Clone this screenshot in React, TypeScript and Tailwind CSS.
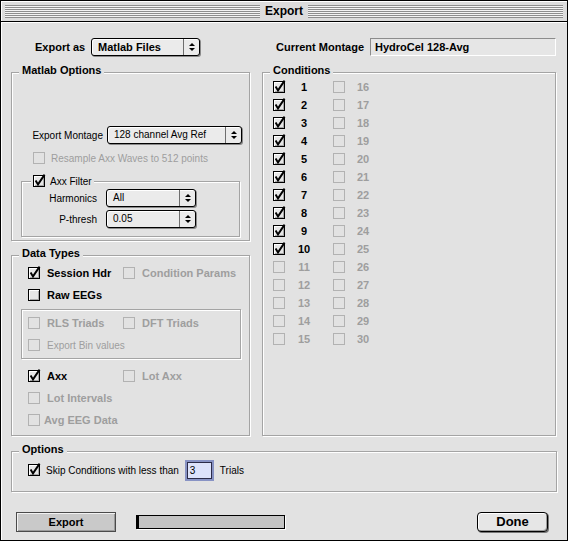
import React from "react";

const BG = "bg-[#e2e2e2]";

function Check({ on = false, disabled = false }: { on?: boolean; disabled?: boolean }) {
  return (
    <span
      className={
        "relative inline-block w-[12px] h-[12px] shrink-0 border " +
        (disabled
          ? "border-[#b2b2b2]"
          : "border-black bg-[#e6e6e6] shadow-[inset_1px_1px_0_#fff,inset_-1px_-1px_0_#a8a8a8]")
      }
    >
      {on && (
        <svg className="absolute left-[-1px] top-[-1px] overflow-visible" width="12" height="12" viewBox="0 0 12 12">
          <path d="M2.6 5.4 L5 9.4 L11.6 -0.4" stroke="#000" strokeWidth="1.9" fill="none" strokeLinejoin="miter" />
        </svg>
      )}
    </span>
  );
}

function Arrows() {
  return (
    <span className="w-[16px] border-l border-[#6e6e6e] flex flex-col items-center justify-center gap-[2px]">
      <svg width="6" height="3" viewBox="0 0 6 3">
        <path d="M0 3 L3 0 L6 3 Z" fill="#000" />
      </svg>
      <svg width="6" height="3" viewBox="0 0 6 3">
        <path d="M0 0 L6 0 L3 3 Z" fill="#000" />
      </svg>
    </span>
  );
}

function Popup({ className, text, bold = false }: { className: string; text: string; bold?: boolean }) {
  return (
    <div
      className={
        "flex h-[18px] rounded-[3px] border border-black bg-[#ebebeb] shadow-[1px_1px_0_#8a8a8a,inset_1px_1px_0_#fff] " +
        className
      }
    >
      <span className={"flex-1 pl-[6px] leading-[16px] whitespace-nowrap " + (bold ? "font-bold text-[11px]" : "text-[10px]")}>
        {text}
      </span>
      <Arrows />
    </div>
  );
}

function Group({ label, className, children }: { label: string; className: string; children?: React.ReactNode }) {
  return (
    <div className={"relative border border-[#a4a4a4] shadow-[inset_1px_1px_0_#fff,1px_1px_0_#fff] " + className}>
      <span className={"absolute left-[7px] top-[-9px] px-[3px] text-[11px] leading-[12px] font-bold " + BG}>{label}</span>
      {children}
    </div>
  );
}

function Item({
  label,
  on = false,
  disabled = false,
  bold = true,
  gap = "gap-[7px]",
  className = "",
}: {
  label: string;
  on?: boolean;
  disabled?: boolean;
  bold?: boolean;
  gap?: string;
  className?: string;
}) {
  return (
    <div className={"flex items-center " + gap + " " + className}>
      <Check on={on} disabled={disabled} />
      <span
        className={
          "whitespace-nowrap " +
          (bold ? "font-bold text-[11px] " : "text-[10px] ") +
          (disabled ? "text-[#9e9e9e]" : "text-black")
        }
      >
        {label}
      </span>
    </div>
  );
}

function Stripes() {
  return (
    <div className="flex-1 h-[13px] bg-[repeating-linear-gradient(to_bottom,#8e8e8e_0px,#8e8e8e_1px,#f4f4f4_1px,#f4f4f4_2px)]" />
  );
}

export default function App() {
  const rows = Array.from({ length: 15 }, (_, i) => i + 1);

  return (
    <div className={"w-[568px] h-[541px] border border-black flex flex-col text-black font-['Liberation_Sans',Arial,sans-serif] " + BG}>
      {/* title bar */}
      <div className="h-[21px] border-b border-black bg-[#dcdcdc] shadow-[inset_1px_1px_0_#fff] flex items-center px-[4px] gap-[5px]">
        <Stripes />
        <span className="text-[12px] font-bold leading-[14px]">Export</span>
        <Stripes />
      </div>

      <div className="flex-1 px-[10px] shadow-[inset_1px_1px_0_#fff]">
        {/* top row */}
        <div className="mt-[16px] h-[18px] flex items-center">
          <span className="ml-[24px] w-[56px] text-[11px] font-bold whitespace-nowrap">Export as</span>
          <Popup className="w-[109px]" text="Matlab Files" bold />
          <span className="ml-[76px] w-[94px] text-[11px] font-bold whitespace-nowrap">Current Montage</span>
          <div className="w-[186px] h-[18px] border border-[#8c8c8c] border-r-white border-b-white bg-[#e6e6e6] pl-[4px] text-[11px] font-bold leading-[16px]">
            HydroCel 128-Avg
          </div>
        </div>

        {/* columns */}
        <div className="mt-[16px] flex gap-[12px]">
          <div className="w-[239px] flex flex-col">
            <Group label="Matlab Options" className="h-[169px]">
              <div className="mt-[53px] h-[18px] flex items-center justify-end gap-[4px] pr-[7px]">
                <span className="text-[10px] whitespace-nowrap">Export Montage</span>
                <Popup className="w-[135px]" text="128 channel Avg Ref" />
              </div>
              <Item className="mt-[8px] h-[12px] pl-[21px]" gap="gap-[6px]" label="Resample Axx Waves to 512 points" disabled bold={false} />
              <div className="relative mt-[17px] ml-[9px] w-[219px] border border-[#a4a4a4] shadow-[inset_1px_1px_0_#fff,1px_1px_0_#fff] pt-[7px] pb-[8px]">
                <div className={"absolute left-[9px] top-[-8px] h-[14px] px-[2px] flex items-center gap-[5px] " + BG}>
                  <Check on />
                  <span className="text-[10px]">Axx Filter</span>
                </div>
                <div className="h-[18px] flex items-center">
                  <span className="w-[75px] text-right text-[10px]">Harmonics</span>
                  <Popup className="ml-[9px] w-[90px]" text="All" />
                </div>
                <div className="mt-[3px] h-[18px] flex items-center">
                  <span className="w-[75px] text-right text-[10px]">P-thresh</span>
                  <Popup className="ml-[9px] w-[90px]" text="0.05" />
                </div>
              </div>
            </Group>

            <Group label="Data Types" className="mt-[14px] h-[181px] pt-[6px]">
              <div className="h-[22px] flex items-center pl-[16px]">
                <Item className="w-[95px]" label="Session Hdr" on />
                <Item label="Condition Params" disabled />
              </div>
              <div className="h-[22px] flex items-center pl-[16px]">
                <Item label="Raw EEGs" />
              </div>
              <div className="mt-[3px] ml-[9px] w-[220px] border border-[#a4a4a4] shadow-[inset_1px_1px_0_#fff,1px_1px_0_#fff] pt-[2px] pb-[2px]">
                <div className="h-[22px] flex items-center pl-[6px]">
                  <Item className="w-[95px]" label="RLS Triads" disabled />
                  <Item label="DFT Triads" disabled />
                </div>
                <div className="h-[22px] flex items-center pl-[6px]">
                  <Item label="Export Bin values" disabled bold={false} />
                </div>
              </div>
              <div className="mt-[6px] h-[22px] flex items-center pl-[16px]">
                <Item className="w-[95px]" label="Axx" on />
                <Item label="Lot Axx" disabled />
              </div>
              <div className="h-[22px] flex items-center pl-[16px]">
                <Item label="Lot Intervals" disabled />
              </div>
              <div className="h-[22px] flex items-center pl-[16px]">
                <Item label="Avg EEG Data" disabled gap="gap-[4px]" />
              </div>
            </Group>
          </div>

          <Group label="Conditions" className="w-[294px] h-[364px] pt-[5px]">
            {rows.map((n) => (
              <div key={n} className="h-[18px] flex items-center pl-[10px]">
                <Check on={n <= 10} disabled={n > 10} />
                <span className={"ml-[9px] w-[20px] text-center text-[11px] font-bold " + (n <= 10 ? "text-black" : "text-[#9e9e9e]")}>
                  {n}
                </span>
                <span className="ml-[19px] flex">
                  <Check disabled />
                </span>
                <span className="ml-[12px] text-[11px] font-bold text-[#9e9e9e]">{n + 15}</span>
              </div>
            ))}
          </Group>
        </div>

        {/* options */}
        <Group label="Options" className="mt-[15px] h-[41px] pt-[7px]">
          <div className="h-[22px] flex items-center pl-[16px]">
            <Item label="Skip Conditions with less than" on bold={false} gap="gap-[6px]" />
            <span className="ml-[6px] w-[29px] h-[21px] border-2 border-[#8893c4] flex">
              <span className="flex-1 border border-[#2c2c48] bg-[#dde3fb] pl-[2px] text-[10px] leading-[15px]">3</span>
            </span>
            <span className="ml-[6px] text-[10px]">Trials</span>
          </div>
        </Group>

        {/* bottom */}
        <div className="mt-[20px] h-[20px] flex items-center">
          <button className="ml-[5px] w-[100px] h-[20px] border border-[#4a4a4a] bg-[#c9c9c9] shadow-[inset_1px_1px_0_#f2f2f2,inset_-1px_-1px_0_#9a9a9a] text-[11px] font-bold">
            Export
          </button>
          <div className="ml-[20px] w-[149px] h-[14px] border border-black border-l-[3px] bg-[#c4c4c4] shadow-[1px_1px_0_#fff]" />
          <button className="ml-auto mr-[9px] w-[71px] h-[20px] rounded-[4px] border border-black bg-[#e6e6e6] shadow-[inset_1px_1px_0_#fff,inset_-1px_-1px_0_#9c9c9c,1px_1px_0_#777] text-[13px] font-bold leading-[16px]">
            Done
          </button>
        </div>
      </div>
    </div>
  );
}
